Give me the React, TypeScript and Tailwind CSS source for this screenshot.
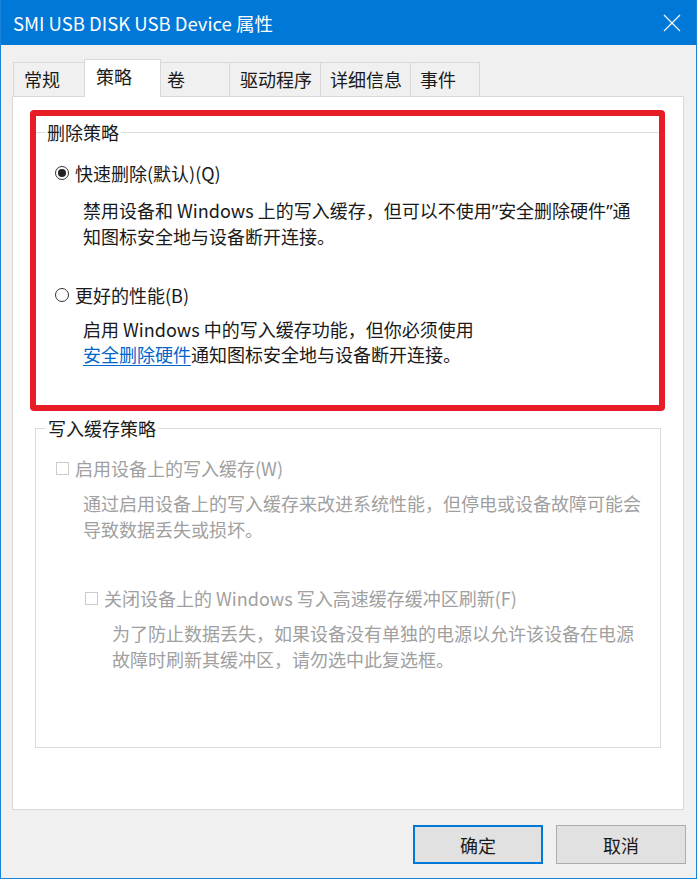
import React from "react";

const tabs = [
  { label: "常规", w: "w-[72px]", pl: "pl-[10px]" },
  { label: "策略", w: "w-[77px]", pl: "pl-[11px]", active: true },
  { label: "卷", w: "w-[70px]", pl: "pl-[6px]" },
  { label: "驱动程序", w: "w-[92px]", pl: "pl-[10px]" },
  { label: "详细信息", w: "w-[91px]", pl: "pl-[9px]" },
  { label: "事件", w: "w-[70px]", pl: "pl-[9px]" },
];

function Radio({ checked }: { checked?: boolean }) {
  return (
    <span className="w-[14px] h-[14px] rounded-full border border-[#333] bg-white flex items-center justify-center shrink-0">
      {checked && <span className="w-[8px] h-[8px] rounded-full bg-[#222]" />}
    </span>
  );
}

function Checkbox() {
  return <span className="w-[13px] h-[13px] border border-[#cccccc] bg-white shrink-0" />;
}

// narrow Latin quotes, as in the Windows dialog
function Q({ children }: { children: React.ReactNode }) {
  return <span style={{ fontFamily: '"Noto Sans", sans-serif' }}>{children}</span>;
}

export default function App(): ReturnType<React.FC> {
  return (
    <div
      className="w-[697px] h-[879px] flex flex-col bg-[#f0f0f0] border-x border-b border-[#1883d7] text-[18px] text-[#1a1a1a] overflow-hidden"
      style={{ fontFamily: '"Noto Sans CJK SC", "Noto Sans", sans-serif' }}
    >
      <header className="h-[45px] bg-[#0078d7] flex items-center justify-between pl-[12px] pr-[15px] shrink-0">
        <span className="text-white text-[18.5px] leading-[24px]">SMI USB DISK USB Device 属性</span>
        <svg width="18" height="18" viewBox="0 0 18 18" className="text-white">
          <path d="M1 1 L17 17 M17 1 L1 17" stroke="currentColor" strokeWidth="1.2" />
        </svg>
      </header>

      <div className="flex flex-col pl-[11px] pr-[12px] pt-[14px]">
        <div className="flex items-end pl-[1px] relative z-10 -mb-px">
          {tabs.map((t) =>
            t.active ? (
              <div
                key={t.label}
                className={`${t.w} ${t.pl} h-[38px] pt-[4px] bg-white border-x border-t border-[#d9d9d9] -ml-px leading-[24px]`}
              >
                {t.label}
              </div>
            ) : (
              <div
                key={t.label}
                className={`${t.w} ${t.pl} h-[35px] pt-[4px] bg-[#f0f0f0] border-x border-t border-b border-[#d9d9d9] -ml-px first:ml-0 leading-[24px]`}
              >
                {t.label}
              </div>
            )
          )}
        </div>

        <section className="h-[714px] bg-white border border-[#d9d9d9] pt-[13px] pl-[17px] pr-[18px]">
          <div className="w-[635px] border-[6px] border-[#e81c24] rounded-[4px] pb-[38px]">
            <fieldset className="m-0 mt-[4px] p-0 border-0 border-t border-[#dcdcdc]">
              <legend className="ml-[9px] px-[2px] leading-[24px]">删除策略</legend>
              <div className="flex items-center gap-[6px] pl-[19px] mt-[17px] leading-[24px]">
                <Radio checked />
                <span>快速删除(默认)(Q)</span>
              </div>
              <p className="pl-[47px] mt-[13px] leading-[25px]">
                禁用设备和 Windows 上的写入缓存，但可以不使用<Q>”</Q>安全删除硬件<Q>”</Q>通
                <br />
                知图标安全地与设备断开连接。
              </p>
              <div className="flex items-center gap-[6px] pl-[19px] mt-[34px] leading-[24px]">
                <Radio />
                <span>更好的性能(B)</span>
              </div>
              <p className="pl-[47px] mt-[10px] leading-[25px]">
                启用 Windows 中的写入缓存功能，但你必须使用
                <br />
                <span className="text-[#0066cc] underline underline-offset-[3px]">安全删除硬件</span>
                通知图标安全地与设备断开连接。
              </p>
            </fieldset>
          </div>

          <fieldset className="m-0 mt-[5px] ml-[5px] w-[626px] p-0 pb-[75px] border border-[#dcdcdc]">
            <legend className="ml-[10px] px-[2px] leading-[24px]">写入缓存策略</legend>
            <div className="flex items-center gap-[6px] pl-[20px] mt-[16px] leading-[24px] text-[#a0a0a0]">
              <Checkbox />
              <span>启用设备上的写入缓存(W)</span>
            </div>
            <p className="pl-[47px] mt-[10px] leading-[26px] text-[#a0a0a0]">
              通过启用设备上的写入缓存来改进系统性能，但停电或设备故障可能会
              <br />
              导致数据丢失或损坏。
            </p>
            <div className="flex items-center gap-[6px] pl-[49px] mt-[44px] leading-[24px] text-[#a0a0a0]">
              <Checkbox />
              <span>关闭设备上的 Windows 写入高速缓存缓冲区刷新(F)</span>
            </div>
            <p className="pl-[76px] mt-[10px] leading-[26px] text-[#a0a0a0]">
              为了防止数据丢失，如果设备没有单独的电源以允许该设备在电源
              <br />
              故障时刷新其缓冲区，请勿选中此复选框。
            </p>
          </fieldset>
        </section>

        <div className="flex justify-end gap-[13px] mt-[15px]">
          <button className="w-[130px] h-[39px] bg-[#e1e1e1] border-2 border-[#0078d7] leading-[24px]">确定</button>
          <button className="w-[130px] h-[39px] bg-[#e1e1e1] border border-[#adadad] leading-[24px] -mr-[2px]">取消</button>
        </div>
      </div>
    </div>
  );
}
